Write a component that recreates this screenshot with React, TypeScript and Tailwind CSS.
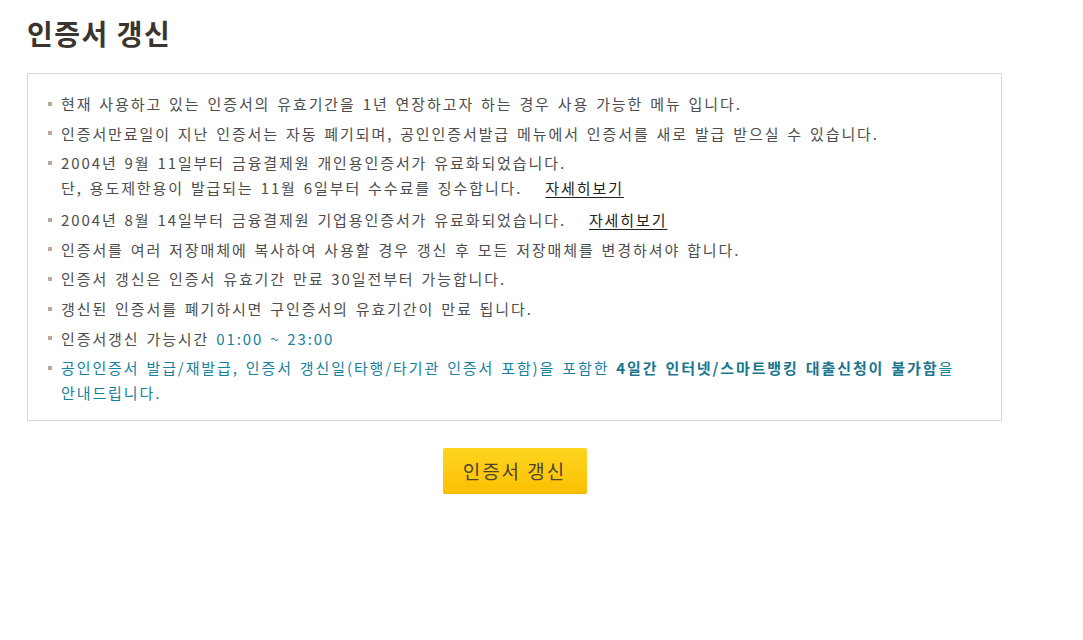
const FONT = { fontFamily: '"Noto Sans CJK KR", "Noto Sans", sans-serif' };

function Bullet() {
  return <span className="mt-[10.5px] mr-[9px] h-[4px] w-[4px] shrink-0 bg-[#b9aa9c]" />;
}

function Item({ children, className = "" }: { children: React.ReactNode; className?: string }) {
  return (
    <li className={`flex ${className}`}>
      <Bullet />
      <div>{children}</div>
    </li>
  );
}

function More() {
  return (
    <a href="#" className="ml-[16px] text-[#222] underline underline-offset-[3px]">
      자세히보기
    </a>
  );
}

export default function App() {
  return (
    <div className="min-h-[640px] bg-white px-[27px] pt-[13px]" style={FONT}>
      <h1 className="text-[28px] font-bold leading-[40px] tracking-[1.5px] text-[#3b352e]">인증서 갱신</h1>

      <div className="mt-[20px] w-[975px] border border-[#d6d6d6] pl-[20px] pr-[16px] pt-[17px] pb-[15px]">
        <ul className="flex flex-col gap-[4.6px] text-[15px] leading-[25px] tracking-[1.9px] [word-spacing:1.7px] text-[#4d4d4d]">
          <Item>현재 사용하고 있는 인증서의 유효기간을 1년 연장하고자 하는 경우 사용 가능한 메뉴 입니다.</Item>
          <Item>인증서만료일이 지난 인증서는 자동 폐기되며, 공인인증서발급 메뉴에서 인증서를 새로 발급 받으실 수 있습니다.</Item>
          <Item className="pb-[2.5px]">
            2004년 9월 11일부터 금융결제원 개인용인증서가 유료화되었습니다.
            <br />
            단, 용도제한용이 발급되는 11월 6일부터 수수료를 징수합니다. <More />
          </Item>
          <Item>
            2004년 8월 14일부터 금융결제원 기업용인증서가 유료화되었습니다. <More />
          </Item>
          <Item>인증서를 여러 저장매체에 복사하여 사용할 경우 갱신 후 모든 저장매체를 변경하셔야 합니다.</Item>
          <Item>인증서 갱신은 인증서 유효기간 만료 30일전부터 가능합니다.</Item>
          <Item>갱신된 인증서를 폐기하시면 구인증서의 유효기간이 만료 됩니다.</Item>
          <Item>
            인증서갱신 가능시간 <span className="text-[#17819e]">01:00 ~ 23:00</span>
          </Item>
          <Item>
            <span className="text-[#17819e]">
              공인인증서 발급/재발급, 인증서 갱신일(타행/타기관 인증서 포함)을 포함한{" "}
              <b className="font-bold text-[#1a7690]">4일간 인터넷/스마트뱅킹 대출신청이 불가함</b>을
              <br />
              안내드립니다.
            </span>
          </Item>
        </ul>
      </div>

      <div className="flex w-[975px] justify-center pt-[27px]">
        <button className="h-[46px] w-[144px] rounded-[2px] border-b border-[#f0b400] bg-gradient-to-b from-[#ffd51e] to-[#fbc000] text-[19px] tracking-[2px] text-[#4e4431]">
          인증서 갱신
        </button>
      </div>
    </div>
  );
}
